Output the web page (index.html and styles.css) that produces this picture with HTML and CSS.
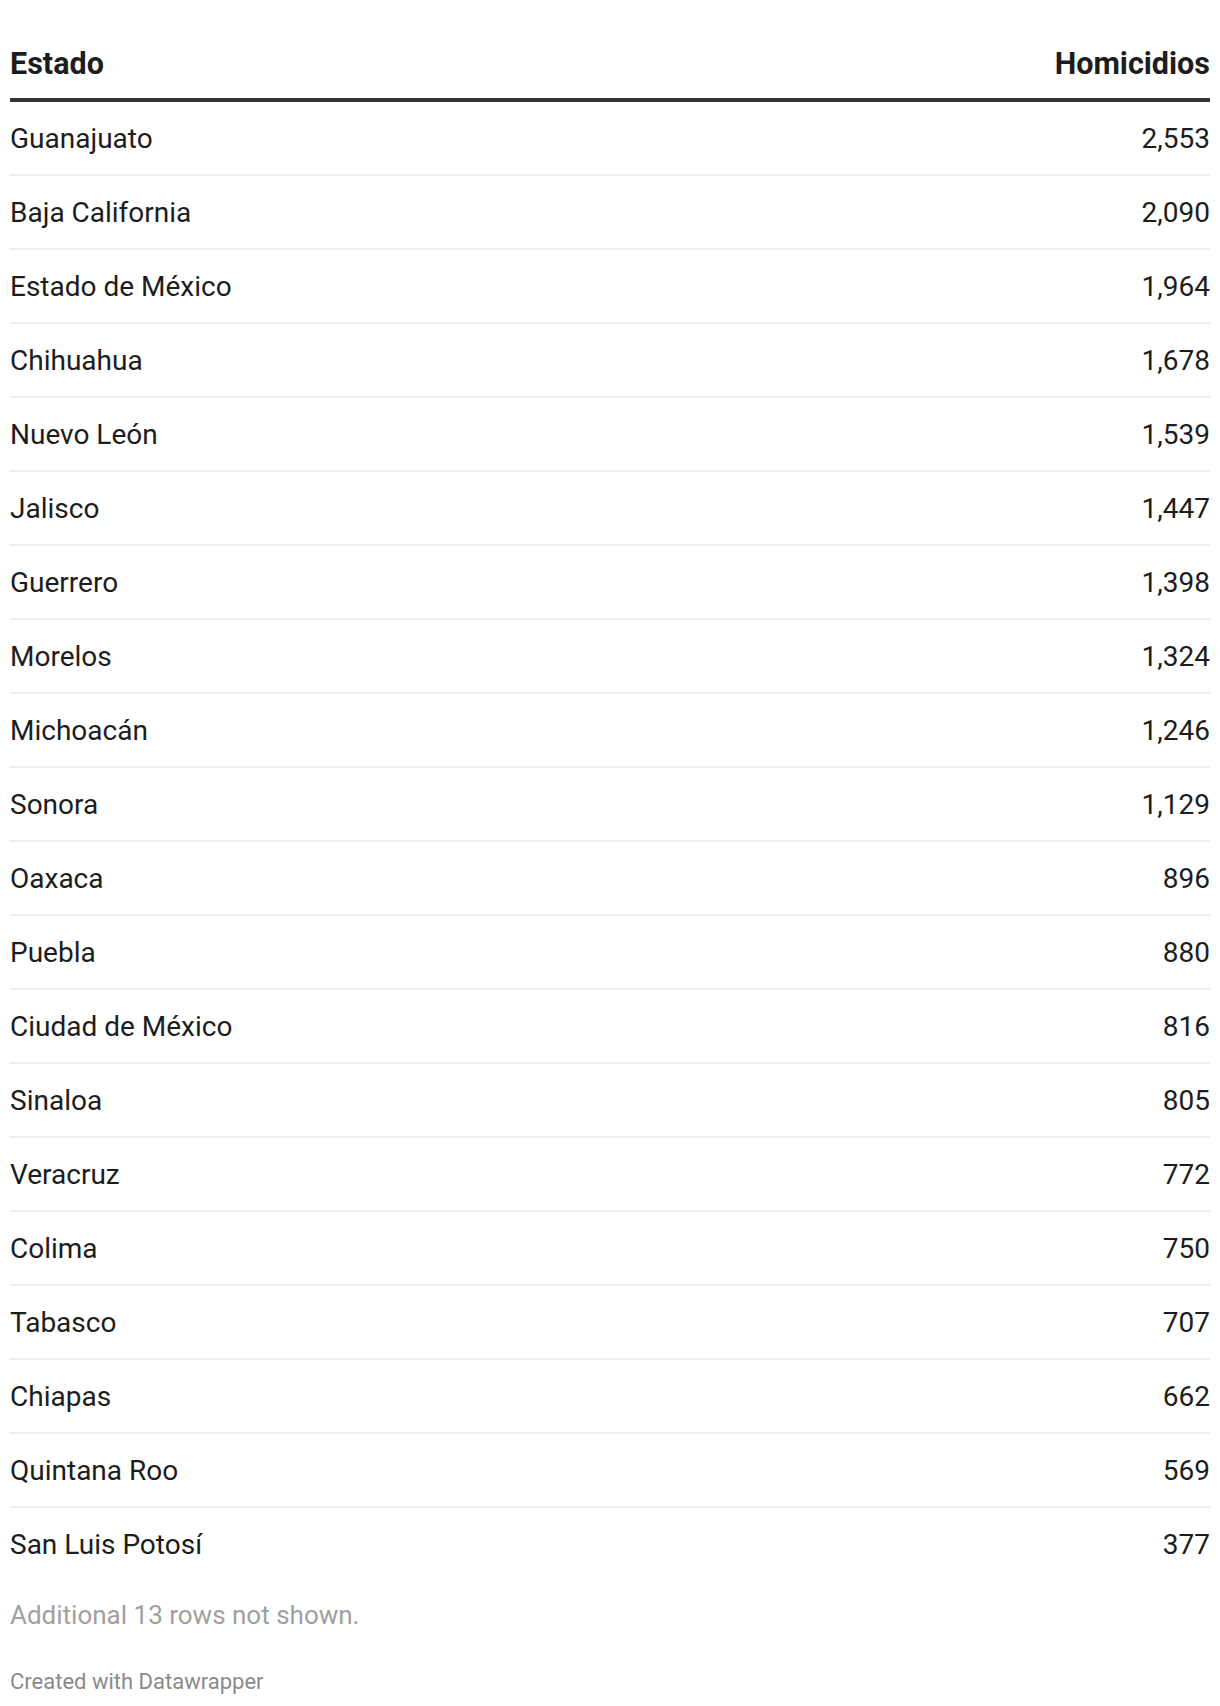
FILE: index.html
```html
<!DOCTYPE html>
<html lang="es">
<head>
    <meta charset="UTF-8">
    <title>Homicidios por estado</title>

    <link rel="stylesheet" href="styles.css">
</head>
<body>
    <div class="wrapper">
        <table class="data-table">
            <thead>
                <tr>
                    <th class="col-name">Estado</th>
                    <th class="col-num">Homicidios</th>
                </tr>
            </thead>
            <tbody>
                <tr><td class="col-name">Guanajuato</td><td class="col-num">2,553</td></tr>
                <tr><td class="col-name">Baja California</td><td class="col-num">2,090</td></tr>
                <tr><td class="col-name">Estado de México</td><td class="col-num">1,964</td></tr>
                <tr><td class="col-name">Chihuahua</td><td class="col-num">1,678</td></tr>
                <tr><td class="col-name">Nuevo León</td><td class="col-num">1,539</td></tr>
                <tr><td class="col-name">Jalisco</td><td class="col-num">1,447</td></tr>
                <tr><td class="col-name">Guerrero</td><td class="col-num">1,398</td></tr>
                <tr><td class="col-name">Morelos</td><td class="col-num">1,324</td></tr>
                <tr><td class="col-name">Michoacán</td><td class="col-num">1,246</td></tr>
                <tr><td class="col-name">Sonora</td><td class="col-num">1,129</td></tr>
                <tr><td class="col-name">Oaxaca</td><td class="col-num">896</td></tr>
                <tr><td class="col-name">Puebla</td><td class="col-num">880</td></tr>
                <tr><td class="col-name">Ciudad de México</td><td class="col-num">816</td></tr>
                <tr><td class="col-name">Sinaloa</td><td class="col-num">805</td></tr>
                <tr><td class="col-name">Veracruz</td><td class="col-num">772</td></tr>
                <tr><td class="col-name">Colima</td><td class="col-num">750</td></tr>
                <tr><td class="col-name">Tabasco</td><td class="col-num">707</td></tr>
                <tr><td class="col-name">Chiapas</td><td class="col-num">662</td></tr>
                <tr><td class="col-name">Quintana Roo</td><td class="col-num">569</td></tr>
                <tr><td class="col-name">San Luis Potosí</td><td class="col-num">377</td></tr>
            </tbody>
        </table>

        <p class="more-rows">Additional 13 rows not shown.</p>
        <p class="credit">Created with Datawrapper</p>
    </div>
</body>
</html>
```

FILE: styles.css
```css
* {
    margin: 0;
    padding: 0;
}

body {
    background: #ffffff;
    font-family: Roboto, "Liberation Sans", sans-serif;
    color: #1d1d1d;
}

.wrapper {
    padding: 0 10px;
}

.data-table {
    width: 100%;
    border-collapse: collapse;
}

.data-table th {
    font-size: 30.5px;
    font-weight: 700;
    line-height: 32px;
    color: #1d1d1d;
    padding: 48px 0 18px;
    border-bottom: 4px solid #333333;
}

.data-table td {
    font-size: 28px;
    line-height: 32px;
    padding: 21px 0 19px;
    border-bottom: 2px solid #eeeeee;
}

.data-table tbody tr:last-child td {
    border-bottom: none;
}

.col-name {
    text-align: left;
}

.col-num {
    text-align: right;
}

.more-rows {
    font-size: 26px;
    line-height: 32px;
    color: #a0a0a0;
    margin-top: 19px;
}

.credit {
    font-size: 22px;
    line-height: 28px;
    color: #8a8a8a;
    margin-top: 37px;
}
```
